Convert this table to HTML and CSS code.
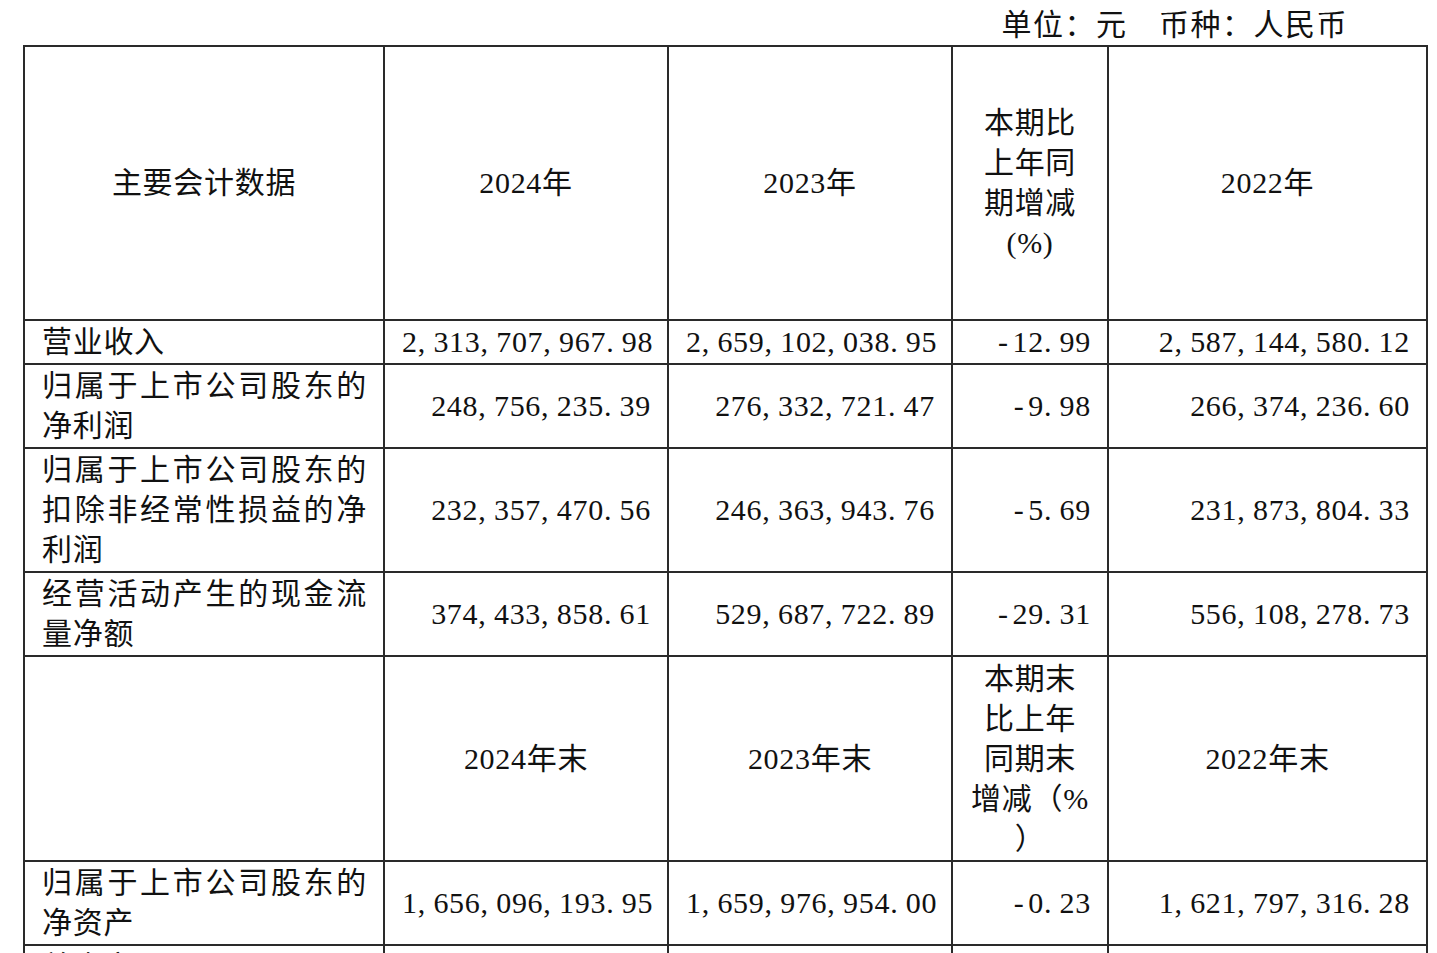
FILE: index.html
```html
<!DOCTYPE html>
<html lang="zh-CN">
<head>
<meta charset="utf-8">
<title>主要会计数据</title>
<link rel="stylesheet" href="styles.css">
</head>
<body>
<div class="page">
  <div class="unit">单位：元　币种：人民币</div>
  <table class="data">
    <colgroup>
      <col class="c-label">
      <col class="c-year">
      <col class="c-year">
      <col class="c-change">
      <col class="c-last">
    </colgroup>
    <tbody>
      <tr class="head head-main">
        <td>主要会计数据</td>
        <td>2024年</td>
        <td>2023年</td>
        <td>本期比<br>上年同<br>期增减<br>(%)</td>
        <td>2022年</td>
      </tr>
      <tr>
        <td class="label">营业收入</td>
        <td class="num">2<span class="p">,</span>313<span class="p">,</span>707<span class="p">,</span>967<span class="p">.</span>98</td>
        <td class="num">2<span class="p">,</span>659<span class="p">,</span>102<span class="p">,</span>038<span class="p">.</span>95</td>
        <td class="num"><span class="m">-</span>12<span class="p">.</span>99</td>
        <td class="num">2<span class="p">,</span>587<span class="p">,</span>144<span class="p">,</span>580<span class="p">.</span>12</td>
      </tr>
      <tr>
        <td class="label">归属于上市公司股东的净利润</td>
        <td class="num">248<span class="p">,</span>756<span class="p">,</span>235<span class="p">.</span>39</td>
        <td class="num">276<span class="p">,</span>332<span class="p">,</span>721<span class="p">.</span>47</td>
        <td class="num"><span class="m">-</span>9<span class="p">.</span>98</td>
        <td class="num">266<span class="p">,</span>374<span class="p">,</span>236<span class="p">.</span>60</td>
      </tr>
      <tr>
        <td class="label">归属于上市公司股东的扣除非经常性损益的净利润</td>
        <td class="num">232<span class="p">,</span>357<span class="p">,</span>470<span class="p">.</span>56</td>
        <td class="num">246<span class="p">,</span>363<span class="p">,</span>943<span class="p">.</span>76</td>
        <td class="num"><span class="m">-</span>5<span class="p">.</span>69</td>
        <td class="num">231<span class="p">,</span>873<span class="p">,</span>804<span class="p">.</span>33</td>
      </tr>
      <tr>
        <td class="label">经营活动产生的现金流量净额</td>
        <td class="num">374<span class="p">,</span>433<span class="p">,</span>858<span class="p">.</span>61</td>
        <td class="num">529<span class="p">,</span>687<span class="p">,</span>722<span class="p">.</span>89</td>
        <td class="num"><span class="m">-</span>29<span class="p">.</span>31</td>
        <td class="num">556<span class="p">,</span>108<span class="p">,</span>278<span class="p">.</span>73</td>
      </tr>
      <tr class="head head-end">
        <td></td>
        <td>2024年末</td>
        <td>2023年末</td>
        <td>本期末<br>比上年<br>同期末<br>增减（%<br>）</td>
        <td>2022年末</td>
      </tr>
      <tr>
        <td class="label">归属于上市公司股东的净资产</td>
        <td class="num">1<span class="p">,</span>656<span class="p">,</span>096<span class="p">,</span>193<span class="p">.</span>95</td>
        <td class="num">1<span class="p">,</span>659<span class="p">,</span>976<span class="p">,</span>954<span class="p">.</span>00</td>
        <td class="num"><span class="m">-</span>0<span class="p">.</span>23</td>
        <td class="num">1<span class="p">,</span>621<span class="p">,</span>797<span class="p">,</span>316<span class="p">.</span>28</td>
      </tr>
      <tr>
        <td class="label">总资产</td>
        <td class="num"></td>
        <td class="num"></td>
        <td class="num"></td>
        <td class="num"></td>
      </tr>
    </tbody>
  </table>
</div>
</body>
</html>
```

FILE: styles.css
```css
html, body {
  margin: 0;
  padding: 0;
  background: #ffffff;
  overflow: hidden;
}

body {
  font-family: "Liberation Serif", "Noto Sans CJK SC", serif;
  font-size: 30px;
  color: #111111;
  letter-spacing: 0.7px;
}

.page {
  padding: 5px 0 0 23px;
}

.unit {
  text-align: right;
  padding-right: 89px;
  line-height: 40px;
  height: 40px;
  white-space: nowrap;
  letter-spacing: 1.5px;
}

.data {
  border-collapse: collapse;
  table-layout: fixed;
  width: 1405px;
}

.c-label { width: 360px; }
.c-year { width: 284px; }
.c-change { width: 156px; }
.c-last { width: 319px; }

.data td {
  border: 2px solid #2a2a2a;
  padding: 1px 16px 1px 17px;
  line-height: 40px;
  vertical-align: middle;
}

.data .label {
  text-align: justify;
}

.data .num {
  text-align: right;
  white-space: nowrap;
}

.head td {
  text-align: center;
  padding-left: 4px;
  padding-right: 4px;
}

.head-main {
  height: 274px;
}

.head-end {
  height: 205px;
}

.p {
  letter-spacing: 8.2px;
}

.m {
  letter-spacing: 4.5px;
}
```
